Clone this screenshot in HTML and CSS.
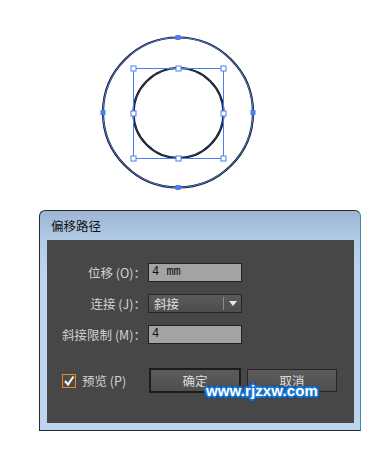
FILE: index.html
```html
<!DOCTYPE html>
<html lang="zh-CN">
<head>
<meta charset="utf-8">
<link rel="stylesheet" href="styles.css">
</head>
<body>
<div class="canvas">
  <svg width="385" height="210" viewBox="0 0 385 210" xmlns="http://www.w3.org/2000/svg">
    <circle cx="178" cy="112.5" r="75" fill="none" stroke="#111" stroke-width="2.2"/>
    <circle cx="178" cy="112.5" r="75" fill="none" stroke="#4a7ef2" stroke-width="1"/>
    <circle cx="178.5" cy="113" r="45" fill="none" stroke="#111" stroke-width="2.2"/>
    <circle cx="178.5" cy="113" r="45" fill="none" stroke="#3b5fc0" stroke-width="0.6"/>
    <rect x="133.5" y="68.5" width="90" height="90" fill="none" stroke="#4a7ef2" stroke-width="1"/>
    <g fill="#fff" stroke="#4a7ef2" stroke-width="1">
      <rect x="131" y="66" width="5" height="5"/>
      <rect x="176" y="66" width="5" height="5"/>
      <rect x="221" y="66" width="5" height="5"/>
      <rect x="131" y="111" width="5" height="5"/>
      <rect x="221" y="111" width="5" height="5"/>
      <rect x="131" y="156" width="5" height="5"/>
      <rect x="176" y="156" width="5" height="5"/>
      <rect x="221" y="156" width="5" height="5"/>
    </g>
    <g fill="#4a7ef2">
      <rect x="175.5" y="35" width="5" height="5"/>
      <rect x="175.5" y="185" width="5" height="5"/>
      <rect x="100.5" y="110" width="5" height="5"/>
      <rect x="250.5" y="110" width="5" height="5"/>
    </g>
  </svg>
</div>
<div class="dialog">
  <div class="titlebar">偏移路径</div>
  <div class="panel">
    <div class="form">
      <label class="lbl">位移 (O)：</label>
      <div class="field">4 mm</div>
      <label class="lbl">连接 (J)：</label>
      <div class="select"><span class="sel-text">斜接</span><span class="sel-sep"></span><span class="sel-arrow"></span></div>
      <label class="lbl">斜接限制 (M)：</label>
      <div class="field">4</div>
    </div>
    <div class="actions">
      <div class="check">
        <span class="box"><svg width="12" height="12" viewBox="0 0 12 12"><path d="M2 6 L5 9.5 L10.5 1.5" fill="none" stroke="#f2f2f2" stroke-width="2.2"/></svg></span>
        <span class="check-label">预览 (P)</span>
      </div>
      <div class="btn btn-default">确定</div>
      <div class="btn">取消</div>
    </div>
  </div>
  <div class="watermark">www.rjzxw.com</div>
</div>
</body>
</html>
```
FILE: styles.css
```css
html, body {
  margin: 0;
  padding: 0;
  background: #fff;
}
body {
  width: 385px;
  height: 459px;
  overflow: hidden;
  font-family: "Noto Sans CJK SC", "Liberation Sans", sans-serif;
}
.canvas {
  height: 210px;
}
.canvas svg {
  display: block;
}
.dialog {
  position: relative;
  margin-left: 39px;
  width: 320px;
  padding: 0 6px 7px 7px;
  box-sizing: content-box;
  width: 307px;
  border: 1px solid #2a2a2a;
  border-right-color: #3a8fa8;
  border-radius: 6px 6px 0 0;
  background: linear-gradient(to bottom, #9cb6d4 0px, #b3cce7 30px, #bcd4ed 60px, #bcd4ed 100%);
}
.titlebar {
  height: 29px;
  line-height: 29px;
  padding-left: 4px;
  font-size: 12.5px;
  color: #111;
}
.panel {
  height: 183px;
  background: #474747;
  box-sizing: border-box;
  padding-top: 23px;
}
.form {
  display: grid;
  grid-template-columns: 99px 94px;
  grid-auto-rows: 19px;
  column-gap: 2px;
  row-gap: 12px;
}
.lbl {
  text-align: right;
  font-size: 12.5px;
  line-height: 19px;
  color: #d2d2d2;
  white-space: nowrap;
}
.field {
  background: #a3a3a3;
  border: 1px solid #222;
  box-sizing: border-box;
  font-family: "Liberation Mono", monospace;
  font-size: 12px;
  line-height: 17px;
  padding-left: 3px;
  color: #111;
}
.select {
  display: flex;
  align-items: center;
  background: linear-gradient(to bottom, #5a5a5a, #4d4d4d);
  border: 1px solid #262626;
  box-sizing: border-box;
}
.sel-text {
  flex: 1;
  font-size: 12.5px;
  color: #e0e0e0;
  padding-left: 5px;
  line-height: 17px;
}
.sel-sep {
  width: 1px;
  height: 13px;
  background: #8a8a8a;
  margin-right: 5px;
}
.sel-arrow {
  width: 0;
  height: 0;
  border-left: 4px solid transparent;
  border-right: 4px solid transparent;
  border-top: 5px solid #e8e8e8;
  margin-right: 4px;
}
.actions {
  display: flex;
  align-items: center;
  margin-top: 24px;
  padding-left: 15px;
}
.check {
  display: flex;
  align-items: center;
  width: 87px;
}
.box {
  width: 14px;
  height: 14px;
  box-sizing: border-box;
  border: 1px solid #e8881e;
  background: #4b4b4b;
  display: flex;
  align-items: center;
  justify-content: center;
}
.box svg {
  display: block;
}
.check-label {
  margin-left: 6px;
  font-size: 12.5px;
  color: #d2d2d2;
}
.btn {
  width: 90px;
  height: 23px;
  box-sizing: border-box;
  border: 1px solid #262626;
  background: linear-gradient(to bottom, #5c5c5c, #4f4f4f);
  color: #dcdcdc;
  font-size: 12.5px;
  display: flex;
  align-items: center;
  justify-content: center;
  margin-left: 6px;
}
.btn-default {
  width: 92px;
  height: 25px;
  border: 2px solid #1c1c1c;
  margin-left: 0;
}
.watermark {
  position: absolute;
  left: 166px;
  top: 171px;
  font-family: "Liberation Sans", Arial, sans-serif;
  font-weight: bold;
  font-size: 15px;
  letter-spacing: 0.1px;
  color: #fff;
  text-shadow:
    1px 0 0 #1a78d4, -1px 0 0 #1a78d4, 0 1px 0 #1a78d4, 0 -1px 0 #1a78d4,
    1px 1px 0 #1a78d4, -1px -1px 0 #1a78d4, 1px -1px 0 #1a78d4, -1px 1px 0 #1a78d4,
    2px 0 0 #1a78d4, -2px 0 0 #1a78d4, 0 2px 0 #1a78d4, 0 -2px 0 #1a78d4,
    2px 2px 1px #0b4f9c, -2px -2px 1px #0b4f9c, 2px -2px 1px #0b4f9c, -2px 2px 1px #0b4f9c;
}
```
